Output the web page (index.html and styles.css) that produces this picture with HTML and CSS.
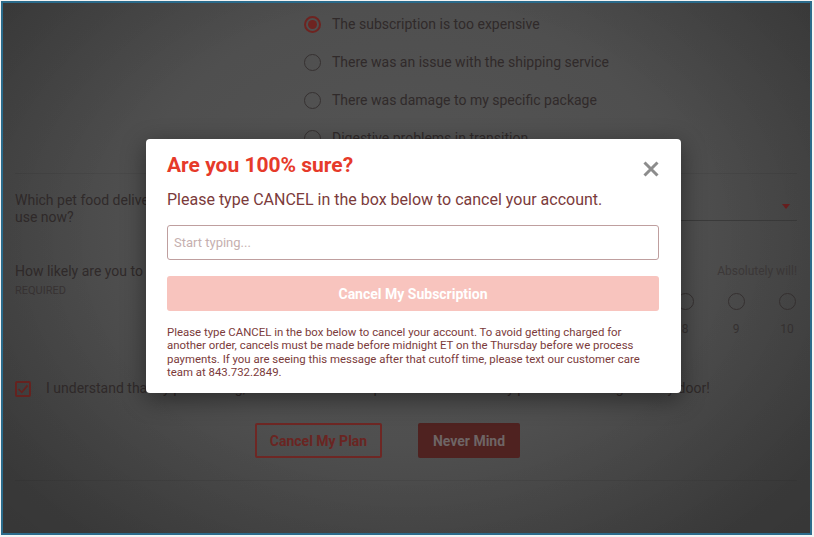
FILE: index.html
```html
<!DOCTYPE html>
<html lang="en">
<head>
<meta charset="utf-8">
<title>Cancel subscription</title>
<link rel="stylesheet" href="styles.css">
</head>
<body>
<div class="frame">
  <div class="page">
    <ul class="reasons">
      <li class="reason"><span class="radio checked"></span>The subscription is too expensive</li>
      <li class="reason"><span class="radio"></span>There was an issue with the shipping service</li>
      <li class="reason"><span class="radio"></span>There was damage to my specific package</li>
      <li class="reason"><span class="radio"></span>Digestive problems in transition</li>
    </ul>
    <div class="divider"></div>
    <div class="qrow">
      <div class="qlabel">Which pet food delivery service do you use now?</div>
      <div class="select"><span class="caret"></span></div>
    </div>
    <div class="qrow scale-row">
      <div class="qlabel">How likely are you to recommend us?<div class="req">REQUIRED</div></div>
      <div class="scale">
        <div class="scale-ends"><span>Not likely</span><span>Absolutely will!</span></div>
        <div class="scale-opts">
          <div class="opt"><span class="radio"></span><span class="num">0</span></div>
          <div class="opt"><span class="radio"></span><span class="num">1</span></div>
          <div class="opt"><span class="radio"></span><span class="num">2</span></div>
          <div class="opt"><span class="radio"></span><span class="num">3</span></div>
          <div class="opt"><span class="radio"></span><span class="num">4</span></div>
          <div class="opt"><span class="radio"></span><span class="num">5</span></div>
          <div class="opt"><span class="radio"></span><span class="num">6</span></div>
          <div class="opt"><span class="radio"></span><span class="num">7</span></div>
          <div class="opt"><span class="radio"></span><span class="num">8</span></div>
          <div class="opt"><span class="radio"></span><span class="num">9</span></div>
          <div class="opt"><span class="radio"></span><span class="num">10</span></div>
        </div>
      </div>
    </div>
    <div class="agree">
      <span class="checkbox"><svg viewBox="0 0 16 16" width="16" height="16"><path d="M3.5 8.2 L6.8 11.3 L12.6 4.4" fill="none" stroke="#6b2421" stroke-width="1.8"/></svg></span>
      <span>I understand that by proceeding, I will lose access to premium meals for my pets delivered right to my door!</span>
    </div>
    <div class="actions">
      <button class="btn btn-outline">Cancel My Plan</button>
      <button class="btn btn-fill">Never Mind</button>
    </div>
    <div class="divider bottom"></div>
  </div>
  <div class="backdrop"></div>
  <div class="modal">
    <div class="modal-head">
      <h2 class="modal-title">Are you 100% sure?</h2>
      <button class="close" aria-label="Close"><svg viewBox="0 0 18 18" width="18" height="18"><path d="M2.5 2.5 L15.5 15.5 M15.5 2.5 L2.5 15.5" stroke="#8c8c8c" stroke-width="3" fill="none"/></svg></button>
    </div>
    <p class="modal-sub">Please type CANCEL in the box below to cancel your account.</p>
    <input class="modal-input" type="text" placeholder="Start typing...">
    <button class="modal-btn">Cancel My Subscription</button>
    <p class="modal-note">Please type CANCEL in the box below to cancel your account. To avoid getting charged for another order, cancels must be made before midnight ET on the Thursday before we process payments. If you are seeing this message after that cutoff time, please text our customer care team at 843.732.2849.</p>
  </div>
</div>
</body>
</html>
```

FILE: styles.css
```css
* { box-sizing: border-box; }
html, body { margin: 0; padding: 0; background: #f4f4f4; }
body { font-family: Roboto, "Liberation Sans", Arial, sans-serif; }

.frame {
  position: relative;
  width: 811px;
  height: 534px;
  margin: 1px 2px 2px 1px;
  border: 2px solid #2b6b8b;
  overflow: hidden;
  background: radial-gradient(ellipse 62% 75% at 50% 42%, #555 0%, #4f4f4f 55%, #3e3e3e 100%);
}

.page {
  padding: 0 13px 0 12px;
  color: #302a2a;
  font-size: 14px;
  line-height: 17px;
}

.reasons { list-style: none; margin: 0; padding: 2px 0 0 289px; }
.reason { height: 38px; display: flex; align-items: center; gap: 11px; }

.radio {
  width: 17px; height: 17px; border-radius: 50%;
  border: 1.5px solid #363131;
  flex: none;
  display: inline-flex; align-items: center; justify-content: center;
}
.radio.checked { border: 2px solid #6e2320; }
.radio.checked::after { content: ""; width: 9px; height: 9px; border-radius: 50%; background: #6e2320; }

.divider { height: 1px; background: rgba(0,0,0,0.06); margin: 16px 0 0; }
.divider.bottom { margin-top: 22px; }

.qrow { display: grid; grid-template-columns: 252px 1fr; margin-top: 18px; }
.qlabel { padding-right: 2px; }
.select { height: 29px; border-bottom: 1px solid #3a3a3a; position: relative; }
.caret {
  position: absolute; right: 7px; top: 12px;
  width: 0; height: 0;
  border-left: 4.5px solid transparent; border-right: 4.5px solid transparent;
  border-top: 5px solid #6a1f1f;
}

.scale-row { margin-top: 37px; }
.req { font-size: 11px; line-height: 13px; margin-top: 4px; color: #383333; }
.scale-ends { display: flex; justify-content: space-between; font-size: 12px; line-height: 17px; color: #3c3838; }
.scale-opts { display: flex; justify-content: space-between; margin-top: 13px; }
.opt { width: 20px; display: flex; flex-direction: column; align-items: center; gap: 12px; }
.num { font-size: 12px; line-height: 14px; color: #363232; }

.agree { display: flex; align-items: center; gap: 15px; margin-top: 44px; height: 17px; }
.checkbox { width: 16px; height: 16px; border: 2px solid #6b2421; border-radius: 2px; flex: none; position: relative; }
.checkbox svg { position: absolute; left: -2px; top: -2px; }

.actions { display: flex; gap: 36px; padding-left: 240px; margin-top: 26px; }
.btn {
  font-family: inherit; font-weight: 700; font-size: 14px;
  height: 35px; border-radius: 2px; padding: 0; cursor: pointer;
}
.btn-outline { width: 127px; background: transparent; border: 2px solid #6e2724; color: #6a2522; }
.btn-fill { width: 102px; background: #4f2220; border: none; color: #6e6565; }

.backdrop {
  position: absolute; inset: 0;
  background: radial-gradient(ellipse 70% 80% at 50% 45%, rgba(0,0,0,0) 55%, rgba(0,0,0,0.12) 100%);
}

.modal {
  position: absolute; left: 143px; top: 136px;
  width: 535px;
  background: #fff;
  border-radius: 4px;
  padding: 14px 22px 14px 21px;
  box-shadow: 0 6px 24px rgba(0,0,0,0.45);
}
.modal-head { display: flex; justify-content: space-between; align-items: flex-start; height: 24px; }
.modal-title { margin: 0; font-size: 21px; line-height: 24px; font-weight: 700; color: #e63a2a; }
.close { background: none; border: none; padding: 0; margin: 7px -1px 0 0; width: 18px; height: 18px; display: block; }
.close svg { display: block; }
.modal-sub { margin: 13px 0 0; font-size: 16px; line-height: 19px; color: #7b3b3b; }
.modal-input {
  display: block; width: 100%; height: 35px; margin-top: 16px;
  border: 1px solid #bf9f9f; border-radius: 3px;
  padding: 0 6px; font-family: inherit; font-size: 13px; color: #7b3b3b; background: #fff;
}
.modal-input::placeholder { color: #c6b0b0; }
.modal-btn {
  display: block; width: 100%; height: 35px; margin-top: 16px;
  background: #f8c4be; border: none; border-radius: 3px;
  color: #fff; font-family: inherit; font-weight: 700; font-size: 14px;
}
.modal-note { margin: 15px 8px 0 0; font-size: 11.4px; line-height: 13.3px; color: #7b3b3b; }
```
